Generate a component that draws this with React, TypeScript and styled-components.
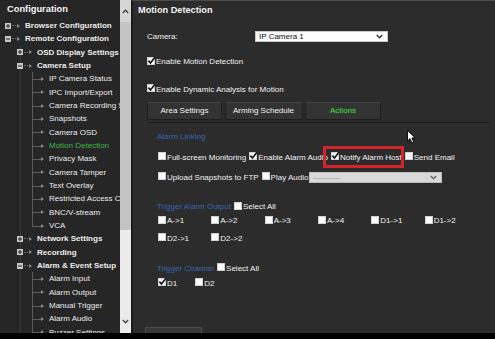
import React from "react";
import styled, {createGlobalStyle, css} from "styled-components";

const GlobalStyle = createGlobalStyle`
  html, body {
    margin: 0;
    padding: 0;
    background: #000;
  }
  body {
    font-family: "Liberation Sans", Arial, sans-serif;
  }
`;

const Screen = styled.div`
  display: flex;
  width: 495px;
  height: 333px;
  overflow: hidden;
  background: #1c1c1c;
`;

/* ---------- sidebar ---------- */

const Sidebar = styled.div`
  display: flex;
  width: 131px;
  flex-shrink: 0;
  background: #262626;
`;

const Tree = styled.div`
  width: 120px;
  overflow: hidden;
  white-space: nowrap;
`;

const SideTitle = styled.div`
  height: 19px;
  line-height: 19px;
  padding-left: 7px;
  font-size: 9.3px;
  font-weight: bold;
  color: #f4f4f4;
`;

const Row = styled.div<{ $level: number; $rail: boolean }>`
  display: flex;
  align-items: center;
  height: 13.33px;
  padding-left: ${p => 5 + p.$level * 12}px;
  font-size: 8px;
  ${p => p.$rail && css`
    background: linear-gradient(#3a3a3a, #3a3a3a) 20px 0 / 1px 100% no-repeat;
  `}
`;

const Gutter = styled.span`
  display: flex;
  align-items: center;
  width: 12px;
  height: 100%;
  flex-shrink: 0;
`;

const Dots = styled.span`
  flex: 1;
  margin: 0 1px;
  border-top: 1px dotted #6a6a6a;
`;

const Branch = styled.span<{ $last?: boolean }>`
  position: relative;
  width: 12px;
  height: 100%;
  flex-shrink: 0;
  &::before {
    content: "";
    position: absolute;
    left: 3px;
    top: 0;
    height: ${p => (p.$last ? "50%" : "100%")};
    border-left: 1px solid #5c5c5c;
  }
  &::after {
    content: "";
    position: absolute;
    left: 3px;
    right: 0;
    top: 50%;
    border-top: 1px solid #5c5c5c;
  }
`;

const Arrow = styled.span`
  width: 0;
  height: 0;
  margin-right: 5px;
  border-left: 3px solid #8c8c8c;
  border-top: 2.5px solid transparent;
  border-bottom: 2.5px solid transparent;
`;

const NodeLabel = styled.span<{ $bold?: boolean; $active?: boolean }>`
  font-weight: ${p => (p.$bold ? "bold" : "normal")};
  color: ${p => (p.$active ? "#3fb84a" : "#ececec")};
`;

const Scrollbar = styled.div`
  display: flex;
  flex-direction: column;
  width: 11px;
  background: #ebebeb;
`;

const ScrollButton = styled.div<{ $top?: boolean }>`
  display: flex;
  align-items: center;
  justify-content: center;
  height: ${p => (p.$top ? 22 : 24)}px;
  background: ${p => (p.$top ? "#d6d6d6" : "#ebebeb")};
`;

const Thumb = styled.div`
  height: 208px;
  background: #c3c3c3;
`;

const Track = styled.div`
  flex: 1;
`;

/* ---------- main panel ---------- */

const Main = styled.div`
  position: relative;
  flex: 1;
  background: #2c2c2c;
  border-left: 2px solid #1b1b1b;
  border-top: 1px solid #4b4b4b;
  color: #f2f2f2;
  font-size: 8px;
  white-space: nowrap;
`;

const Title = styled.div`
  height: 19px;
  line-height: 19px;
  padding-left: 5px;
  font-size: 9.2px;
  font-weight: bold;
`;

const Form = styled.div`
  padding-left: 14px;
`;

const CameraRow = styled.div`
  display: flex;
  align-items: center;
  height: 19px;
  margin-top: 7px;
`;

const FieldLabel = styled.span`
  width: 108px;
`;

const Select = styled.div<{ $muted?: boolean }>`
  display: flex;
  align-items: center;
  justify-content: space-between;
  box-sizing: border-box;
  width: 133px;
  height: 11px;
  padding: 0 4px 0 3px;
  background: ${p => (p.$muted ? "#d9d9d9" : "#fdfdfd")};
  border: 1px solid ${p => (p.$muted ? "#bdbdbd" : "#c9c9c9")};
  color: ${p => (p.$muted ? "#8a8a8a" : "#111")};
  font-size: 8px;
  margin-left: ${p => (p.$muted ? -2 : 0)}px;
`;

const Line = styled.div<{ $mt: number; $inset?: boolean }>`
  display: flex;
  align-items: center;
  gap: 3px;
  height: 14px;
  margin-top: ${p => p.$mt}px;
  padding-left: ${p => (p.$inset ? 1 : 0)}px;
`;

const TabBar = styled.div`
  display: flex;
  gap: 2.5px;
  margin: 5.7px 6px 0 0;
  padding-bottom: 2px;
  border-bottom: 1px solid #1c1c1c;
`;

const Tab = styled.div<{ $w: number; $active?: boolean }>`
  box-sizing: border-box;
  width: ${p => p.$w}px;
  height: 18px;
  line-height: 16px;
  text-align: center;
  background: #333;
  border: 1px solid #1e1e1e;
  border-top-color: #444;
  color: #f2f2f2;
  ${p => p.$active && css`
    color: #44c444;
    text-shadow: 0 0 2px rgba(70, 200, 70, 0.6);
  `}
`;

const Content = styled.div`
  padding-left: 10px;
`;

const Heading = styled.span`
  color: #3764b3;
`;

const CheckItem = styled.span<{ $highlight?: boolean }>`
  position: relative;
  display: inline-flex;
  align-items: center;
  ${p => p.$highlight && css`
    &::after {
      content: "";
      position: absolute;
      left: -8.3px;
      right: -2.7px;
      top: -6.3px;
      bottom: -6.3px;
      border: 3px solid #d3242c;
    }
  `}
`;

const Box = styled.span`
  position: relative;
  flex-shrink: 0;
  width: 8px;
  height: 8px;
  margin-right: 1px;
  background: #fbfbfb;
  box-shadow: inset 0 0 0 1px #d0d0d0;
  transform: translateY(-1px);
`;

const TickSvg = styled.svg`
  position: absolute;
  left: 0;
  top: -1px;
`;

const OutputGrid = styled.div<{ $mt: number }>`
  display: grid;
  grid-template-columns: repeat(6, 53.33px);
  align-items: center;
  height: 14px;
  margin-top: ${p => p.$mt}px;
  padding-left: 1px;
`;

const ChannelRow = styled(Line)`
  gap: 18px;
`;

const SaveButton = styled.div`
  box-sizing: border-box;
  width: 57px;
  height: 17px;
  margin: 36.7px 0 0 -2px;
  line-height: 15px;
  text-align: center;
  background: #393939;
  border: 1px solid #4c4c4c;
  border-radius: 1px;
  color: #f2f2f2;
`;

const Cursor = styled.svg`
  position: absolute;
  left: 274px;
  top: 129px;
`;

/* ---------- data ---------- */

type TreeNode = {
  label: string;
  level: number;
  bold?: boolean;
  exp?: "+" | "-";
  active?: boolean;
  last?: boolean;
};

const tree: TreeNode[] = [
  {label: "Browser Configuration", level: 0, bold: true, exp: "+"},
  {label: "Remote Configuration", level: 0, bold: true, exp: "-"},
  {label: "OSD Display Settings", level: 1, bold: true, exp: "+"},
  {label: "Camera Setup", level: 1, bold: true, exp: "-"},
  {label: "IP Camera Status", level: 2},
  {label: "IPC Import/Export", level: 2},
  {label: "Camera Recording Settings", level: 2},
  {label: "Snapshots", level: 2},
  {label: "Camera OSD", level: 2},
  {label: "Motion Detection", level: 2, active: true},
  {label: "Privacy Mask", level: 2},
  {label: "Camera Tamper", level: 2},
  {label: "Text Overlay", level: 2},
  {label: "Restricted Access Cameras", level: 2},
  {label: "BNC/V-stream", level: 2},
  {label: "VCA", level: 2, last: true},
  {label: "Network Settings", level: 1, bold: true, exp: "+"},
  {label: "Recording", level: 1, bold: true, exp: "+"},
  {label: "Alarm & Event Setup", level: 1, bold: true, exp: "-"},
  {label: "Alarm Input", level: 2},
  {label: "Alarm Output", level: 2},
  {label: "Manual Trigger", level: 2},
  {label: "Alarm Audio", level: 2},
  {label: "Buzzer Settings", level: 2},
];

const outputs = ["A->1", "A->2", "A->3", "A->4", "D1->1", "D1->2"];

/* ---------- pieces ---------- */

function Expander({sign}: { sign: "+" | "-" }) {
  return (
    <svg width="6" height="6" viewBox="0 0 6 6">
      <rect width="6" height="6" fill="#c6c6c6"/>
      <path d="M1 3h4" stroke="#2a2a2a" strokeWidth="1"/>
      {sign === "+" && <path d="M3 1v4" stroke="#2a2a2a" strokeWidth="1"/>}
    </svg>
  );
}

function Chevron({up, down, color = "#333"}: { up?: boolean; down?: boolean; color?: string }) {
  return (
    <svg width="7" height="5" viewBox="0 0 7 5">
      <polyline points={up ? "0.8,4 3.5,1.2 6.2,4" : "0.8,1 3.5,3.8 6.2,1"}
                fill="none" stroke={color} strokeWidth={down ? 1.4 : 1.2}/>
    </svg>
  );
}

function Check({label, checked, highlight}: { label: string; checked?: boolean; highlight?: boolean }) {
  return (
    <CheckItem $highlight={highlight}>
      <Box>
        {checked &&
          <TickSvg width="9" height="9" viewBox="0 0 9 9">
            <path d="M1.4 4.6 L3.5 7 L7.9 1.2" fill="none" stroke="#111" strokeWidth="1.6"/>
          </TickSvg>}
      </Box>
      {label}
    </CheckItem>
  );
}

function App() {
  return (
    <>
      <GlobalStyle/>
      <Screen>
        <Sidebar>
          <Tree>
            <SideTitle>Configuration</SideTitle>
            {tree.map(n =>
              <Row key={n.label} $level={n.level} $rail={n.level > 0}>
                {n.exp
                  ? <Gutter><Expander sign={n.exp}/><Dots/></Gutter>
                  : <Branch $last={n.last}/>}
                <Arrow/>
                <NodeLabel $bold={n.bold} $active={n.active}>{n.label}</NodeLabel>
              </Row>
            )}
          </Tree>
          <Scrollbar>
            <ScrollButton $top><Chevron up/></ScrollButton>
            <Thumb/>
            <Track/>
            <ScrollButton><Chevron down color="#444"/></ScrollButton>
          </Scrollbar>
        </Sidebar>

        <Main>
          <Title>Motion Detection</Title>
          <Form>
            <CameraRow>
              <FieldLabel>Camera:</FieldLabel>
              <Select>IP Camera 1<Chevron down/></Select>
            </CameraRow>
            <Line $mt={8.7}><Check label="Enable Motion Detection" checked/></Line>
            <Line $mt={13.6}><Check label="Enable Dynamic Analysis for Motion" checked/></Line>

            <TabBar>
              <Tab $w={75}>Area Settings</Tab>
              <Tab $w={78}>Arming Schedule</Tab>
              <Tab $w={76} $active>Actions</Tab>
            </TabBar>

            <Content>
              <Line $mt={6.7}><Heading>Alarm Linking</Heading></Line>
              <Line $mt={6.6} $inset>
                <Check label="Full-screen Monitoring"/>
                <Check label="Enable Alarm Audio" checked/>
                <Check label="Notify Alarm Host" checked highlight/>
                <Check label="Send Email"/>
              </Line>
              <Line $mt={6} $inset>
                <Check label="Upload Snapshots to FTP"/>
                <Check label="Play Audio"/>
                <Select $muted>----------<Chevron down color="#666"/></Select>
              </Line>

              <Line $mt={15.4}>
                <Heading>Trigger Alarm Output</Heading>
                <Check label="Select All"/>
              </Line>
              <OutputGrid $mt={0.3}>
                {outputs.map(o => <Check key={o} label={o}/>)}
              </OutputGrid>
              <OutputGrid $mt={3.3}>
                <Check label="D2->1"/>
                <Check label="D2->2"/>
              </OutputGrid>

              <Line $mt={16}>
                <Heading>Trigger Channel</Heading>
                <Check label="Select All"/>
              </Line>
              <ChannelRow $mt={1} $inset>
                <Check label="D1" checked/>
                <Check label="D2"/>
              </ChannelRow>
            </Content>

            <SaveButton>Save</SaveButton>
          </Form>

          <Cursor width="10" height="14" viewBox="0 0 10 14">
            <path d="M0.5 0.5 L0.5 11 L3 8.6 L4.9 12.9 L6.7 12.1 L4.9 7.9 L8.3 7.9 Z"
                  fill="#fff" stroke="#000" strokeWidth="0.9"/>
          </Cursor>
        </Main>
      </Screen>
    </>
  );
}

export default App;
